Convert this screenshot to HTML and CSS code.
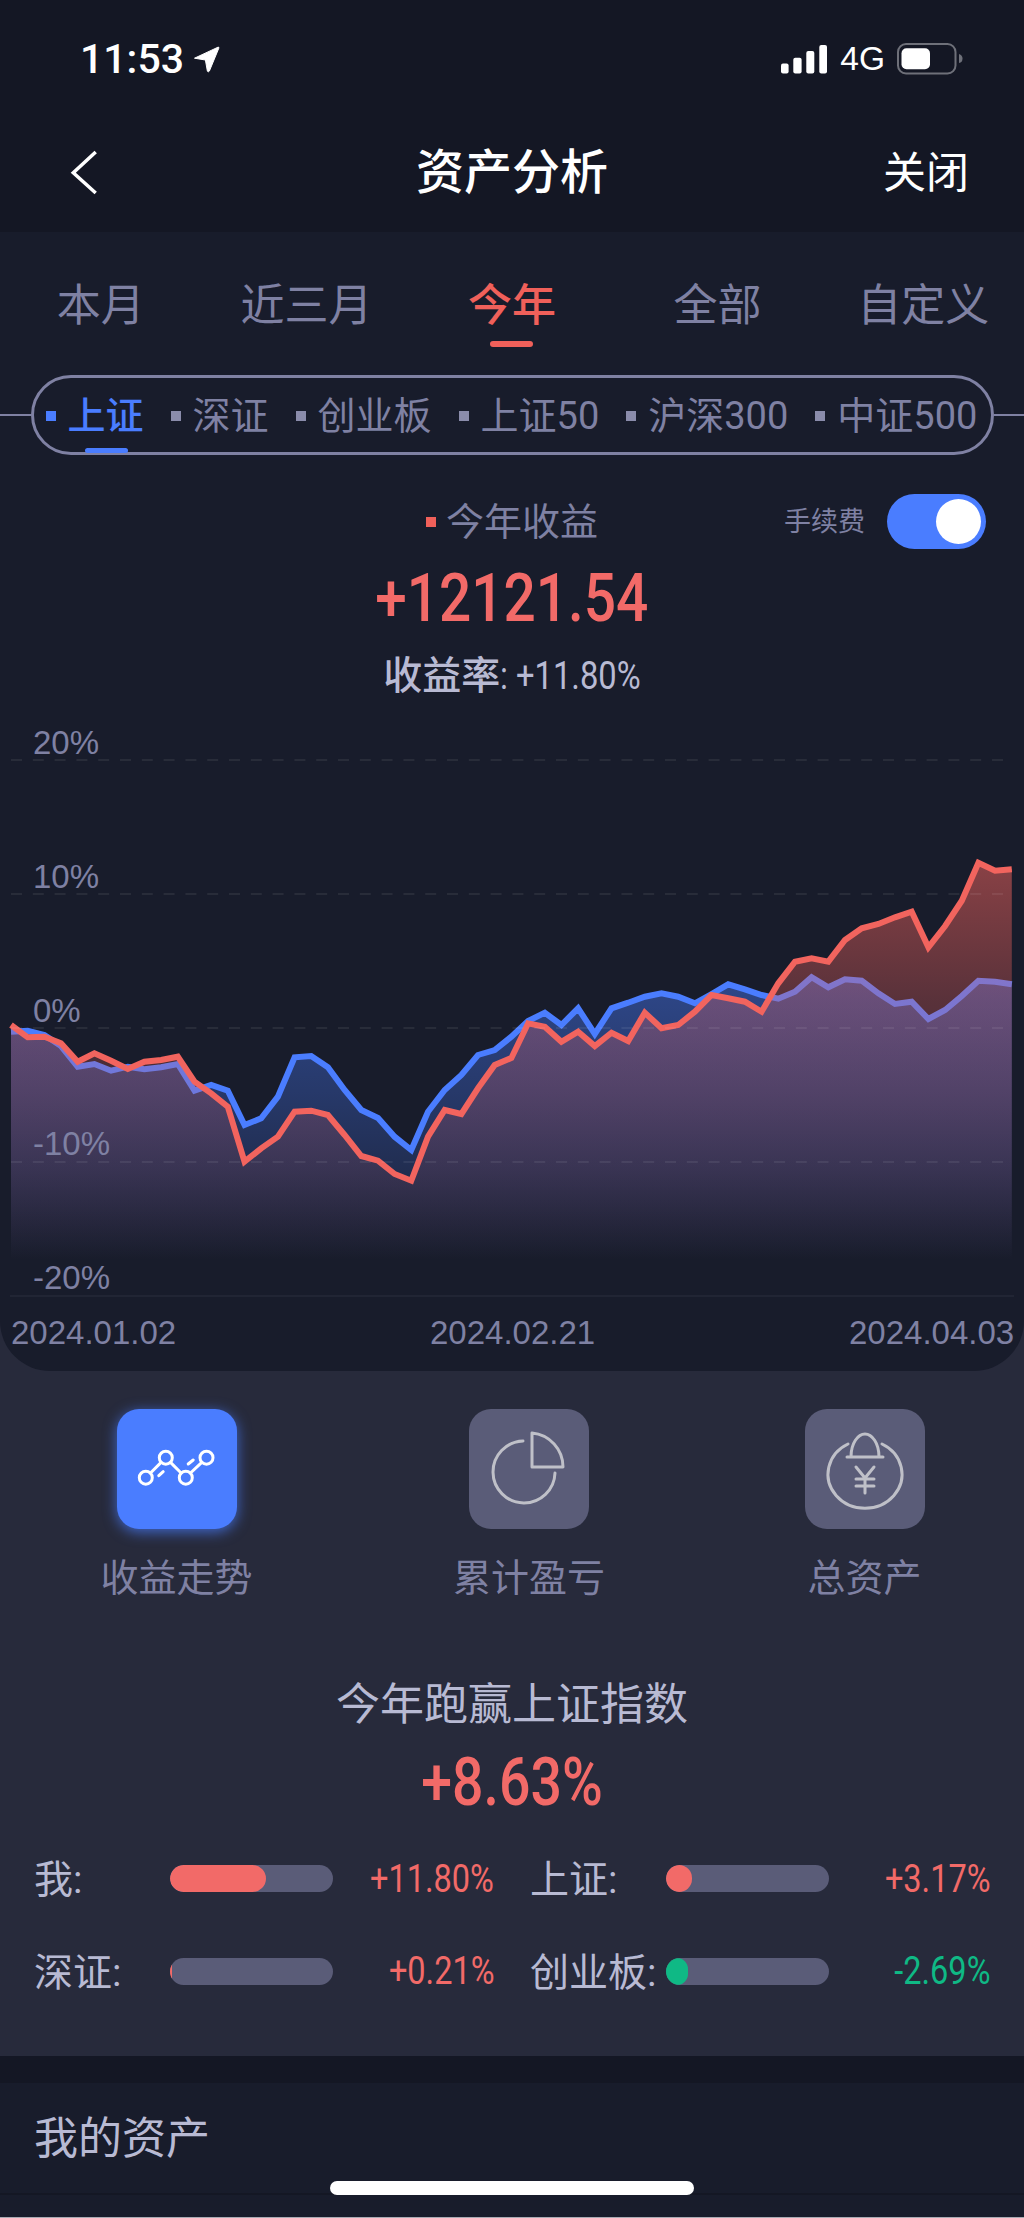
FILE: index.html
```html
<!DOCTYPE html>
<html lang="zh-CN">
<head>
<meta charset="utf-8">
<title>资产分析</title>
<link rel="stylesheet" href="styles.css">
</head>
<body>
<div class="page">
  <header class="top">
    <div class="status">
      <div class="status-left">
        <span class="time">11:53</span>
        <svg class="loc" width="27" height="27" viewBox="0 0 27 27"><path d="M1.5 12.2 L25 1.2 Q26.2 .8 25.8 2.2 L16.4 25 Q15.6 26.4 14.4 25.2 L12.4 14 Z" fill="#fff" stroke="#fff" stroke-width="1" stroke-linejoin="round"/></svg>
      </div>
      <div class="status-right">
        <svg class="signal" width="47" height="29" viewBox="0 0 47 29"><rect x="0" y="18.500" width="7.600" height="10" rx="2" fill="#fff"/><rect x="12.300" y="12.800" width="8.300" height="15.700" rx="2" fill="#fff"/><rect x="25.300" y="6.100" width="8" height="22.400" rx="2" fill="#fff"/><rect x="38.300" y="0.100" width="7.700" height="28.400" rx="2" fill="#fff"/></svg>
        <span class="net">4G</span>
        <svg class="battery" width="66" height="32" viewBox="0 0 66 32"><rect x="1" y="1" width="57.500" height="29.500" rx="8" fill="none" stroke="#6e7079" stroke-width="2"/><rect x="4.500" y="5.300" width="28.500" height="21" rx="5" fill="#fff"/><path d="M62 11 Q65.500 12 65.500 15.500 Q65.500 19.500 62 20 Z" fill="#6e7079"/></svg>
      </div>
    </div>
    <nav class="nav">
      <svg class="back" width="30" height="46" viewBox="0 0 30 46"><path d="M25.700 2 L3.300 22.700 L25.700 43" fill="none" stroke="#fff" stroke-width="3.500"/></svg>
      <h1 class="nav-title">资产分析</h1>
      <span class="nav-close">关闭</span>
    </nav>
  </header>

  <section class="panel">
    <div class="tabs">
      <div class="tab">本月</div>
      <div class="tab">近三月</div>
      <div class="tab active">今年<i class="tab-mark"></i></div>
      <div class="tab">全部</div>
      <div class="tab">自定义</div>
    </div>

    <div class="index-row">
      <span class="index-line"></span>
      <div class="index-pill">
        <div class="index-item active"><i class="bullet"></i><span>上证</span><i class="index-mark"></i></div>
        <div class="index-item"><i class="bullet"></i><span>深证</span></div>
        <div class="index-item"><i class="bullet"></i><span>创业板</span></div>
        <div class="index-item"><i class="bullet"></i><span>上证50</span></div>
        <div class="index-item"><i class="bullet"></i><span>沪深300</span></div>
        <div class="index-item"><i class="bullet"></i><span>中证500</span></div>
      </div>
      <span class="index-line"></span>
    </div>

    <div class="summary-head">
      <span></span>
      <div class="summary-label"><i class="bullet red"></i><span>今年收益</span></div>
      <div class="fee"><span class="fee-text">手续费</span><span class="toggle"><i class="knob"></i></span></div>
    </div>
    <div class="amount"><span class="amount-num">+12121.54</span></div>
    <div class="rate"><b class="rate-label">收益率</b><span class="rate-num">: +11.80%</span></div>

    <svg class="chart" width="1024" height="651" viewBox="0 720 1024 651">
      <defs>
        <linearGradient id="fillBlue" gradientUnits="userSpaceOnUse" x1="0" y1="862" x2="0" y2="1260">
          <stop offset="0" stop-color="#4a7dff" stop-opacity=".55"/>
          <stop offset=".289" stop-color="#4a7dff" stop-opacity=".45"/>
          <stop offset=".573" stop-color="#4a7dff" stop-opacity=".3"/>
          <stop offset=".774" stop-color="#4a7dff" stop-opacity=".18"/>
          <stop offset="1" stop-color="#4a7dff" stop-opacity="0"/>
        </linearGradient>
        <linearGradient id="fillRed" gradientUnits="userSpaceOnUse" x1="0" y1="862" x2="0" y2="1260">
          <stop offset="0" stop-color="#f2645e" stop-opacity=".52"/>
          <stop offset=".347" stop-color="#f2645e" stop-opacity=".3"/>
          <stop offset=".6" stop-color="#f2645e" stop-opacity=".2"/>
          <stop offset="1" stop-color="#f2645e" stop-opacity="0"/>
        </linearGradient>
      </defs>
      <polygon fill="url(#fillBlue)" points="11,1260 11,1031.7 27.7,1030.7 44.4,1035 61,1046 77.7,1066.7 94.4,1064 111.1,1070.7 127.8,1066.7 144.4,1069.3 161.1,1067.3 177.8,1064 194.5,1090.7 211.2,1085 227.8,1090.7 244.5,1125 261.2,1118.3 277.9,1096.7 294.6,1057.3 311.2,1056 327.9,1067.3 344.6,1090 361.3,1110 378,1118 394.6,1136.7 411.3,1150 428,1111.7 444.7,1090 461.4,1075 478,1055 494.7,1050 511.4,1036.7 528.1,1021 544.8,1012.7 561.4,1025 578.1,1008.3 594.8,1034 611.5,1008.3 628.2,1002.7 644.8,996.7 661.5,993.3 678.2,996.7 694.9,1003.3 711.6,994 728.2,984.3 744.9,989.3 761.6,995 778.3,998.7 795,991.7 811.6,977.3 828.3,987.3 845,979.3 861.7,980.7 878.4,993.3 895,1004 911.7,1001.7 928.4,1019 945.1,1010 961.8,996 978.4,980.7 995.1,981.7 1011.8,984.3 1011.8,1260"/>
      <polyline class="line line-blue" points="11,1031.7 27.7,1030.7 44.4,1035 61,1046 77.7,1066.7 94.4,1064 111.1,1070.7 127.8,1066.7 144.4,1069.3 161.1,1067.3 177.8,1064 194.5,1090.7 211.2,1085 227.8,1090.7 244.5,1125 261.2,1118.3 277.9,1096.7 294.6,1057.3 311.2,1056 327.9,1067.3 344.6,1090 361.3,1110 378,1118 394.6,1136.7 411.3,1150 428,1111.7 444.7,1090 461.4,1075 478,1055 494.7,1050 511.4,1036.7 528.1,1021 544.8,1012.7 561.4,1025 578.1,1008.3 594.8,1034 611.5,1008.3 628.2,1002.7 644.8,996.7 661.5,993.3 678.2,996.7 694.9,1003.3 711.6,994 728.2,984.3 744.9,989.3 761.6,995 778.3,998.7 795,991.7 811.6,977.3 828.3,987.3 845,979.3 861.7,980.7 878.4,993.3 895,1004 911.7,1001.7 928.4,1019 945.1,1010 961.8,996 978.4,980.7 995.1,981.7 1011.8,984.3"/>
      <polygon fill="url(#fillRed)" points="11,1260 11,1025 27.7,1037.3 44.4,1036.7 61,1043.3 77.7,1061.7 94.4,1053.3 111.1,1060.7 127.8,1069 144.4,1061.7 161.1,1060 177.8,1056.7 194.5,1081.7 211.2,1093.3 227.8,1106.7 244.5,1161.7 261.2,1148.3 277.9,1136.7 294.6,1111.7 311.2,1110.7 327.9,1115 344.6,1135 361.3,1156 378,1160.7 394.6,1174 411.3,1180.7 428,1136.7 444.7,1110 461.4,1114 478,1088.3 494.7,1065 511.4,1058 528.1,1023.3 544.8,1026.7 561.4,1041.7 578.1,1031.7 594.8,1046 611.5,1032.7 628.2,1041 644.8,1012.7 661.5,1028.3 678.2,1025 694.9,1011.7 711.6,995 728.2,998.3 744.9,1001.7 761.6,1011.7 778.3,983.3 795,961.7 811.6,958.3 828.3,961.7 845,940 861.7,928.3 878.4,924 895,917.3 911.7,911.7 928.4,947.3 945.1,926 961.8,900.7 978.4,862.7 995.1,870.7 1011.8,869.3 1011.8,1260"/>
      <polyline class="line line-red" points="11,1025 27.7,1037.3 44.4,1036.7 61,1043.3 77.7,1061.7 94.4,1053.3 111.1,1060.7 127.8,1069 144.4,1061.7 161.1,1060 177.8,1056.7 194.5,1081.7 211.2,1093.3 227.8,1106.7 244.5,1161.7 261.2,1148.3 277.9,1136.7 294.6,1111.7 311.2,1110.7 327.9,1115 344.6,1135 361.3,1156 378,1160.7 394.6,1174 411.3,1180.7 428,1136.7 444.7,1110 461.4,1114 478,1088.3 494.7,1065 511.4,1058 528.1,1023.3 544.8,1026.7 561.4,1041.7 578.1,1031.7 594.8,1046 611.5,1032.7 628.2,1041 644.8,1012.7 661.5,1028.3 678.2,1025 694.9,1011.7 711.6,995 728.2,998.3 744.9,1001.7 761.6,1011.7 778.3,983.3 795,961.7 811.6,958.3 828.3,961.7 845,940 861.7,928.3 878.4,924 895,917.3 911.7,911.7 928.4,947.3 945.1,926 961.8,900.7 978.4,862.7 995.1,870.7 1011.8,869.3"/>
      <path class="grid" d="M11 760H1005M11 894H1005M11 1028H1005M11 1162H1005"/>
      <path class="axis" d="M10 1296H1014"/>
      <text class="chart-label" x="33" y="754">20%</text>
      <text class="chart-label" x="33" y="888">10%</text>
      <text class="chart-label" x="33" y="1022">0%</text>
      <text class="chart-label" x="33" y="1155">-10%</text>
      <text class="chart-label" x="33" y="1289">-20%</text>
      <text class="chart-label" x="11" y="1344">2024.01.02</text>
      <text class="chart-label" x="430" y="1344">2024.02.21</text>
      <text class="chart-label" x="849" y="1344">2024.04.03</text>
    </svg>
  </section>

  <section class="analysis">
    <div class="modes">
      <div class="mode">
        <span class="tile tile-on">
          <svg width="119" height="120" viewBox="117.500 1409 119 120" fill="none" stroke="#fff" stroke-width="3" stroke-linecap="round">
            <circle cx="146.300" cy="1477.700" r="6.500"/><circle cx="166.300" cy="1457.700" r="6.500"/><circle cx="186.300" cy="1477.700" r="6.500"/><circle cx="207" cy="1457.700" r="6.500"/>
            <path d="M151 1473 L161.600 1462.400M171 1462.400 L181.600 1473M191 1473 L202.300 1462.400M159.300 1475.700 L163.700 1471.700M188.700 1464 L193.700 1460"/>
          </svg>
        </span>
        <span class="mode-name">收益走势</span>
      </div>
      <div class="mode">
        <span class="tile">
          <svg width="120" height="120" viewBox="469 1409 120 120" fill="none" stroke="#bfc0c8" stroke-width="3" stroke-linecap="round">
            <path d="M523 1441 A31 31 0 1 0 555 1473"/>
            <path d="M532 1433 V1467 H563 A34 34 0 0 0 532 1433 Z" stroke-linejoin="round"/>
          </svg>
        </span>
        <span class="mode-name">累计盈亏</span>
      </div>
      <div class="mode">
        <span class="tile">
          <svg width="119" height="120" viewBox="805 1409 119 120" fill="none" stroke="#bfc0c8" stroke-width="3" stroke-linecap="round" stroke-linejoin="round">
            <path d="M848 1444 A37 34 0 1 0 882 1444"/>
            <path d="M847 1457 H883M851 1457 C851 1443 858 1434 865 1434 C872 1434 879 1443 879 1457"/>
            <path d="M856 1467 L865 1478 L874 1467M856 1479 H874M856 1486 H874M865 1478 V1493"/>
          </svg>
        </span>
        <span class="mode-name">总资产</span>
      </div>
    </div>

    <h2 class="beat-title">今年跑赢上证指数</h2>
    <div class="beat-value"><span class="beat-num">+8.63%</span></div>

    <div class="compare">
      <div class="cmp">
        <span class="cmp-name">我:</span>
        <span class="track"><i class="bar red" style="width:96px"></i></span>
        <span class="cmp-val up"><span class="cmp-num">+11.80%</span></span>
      </div>
      <div class="cmp">
        <span class="cmp-name">上证:</span>
        <span class="track"><i class="bar red" style="width:26px"></i></span>
        <span class="cmp-val up"><span class="cmp-num">+3.17%</span></span>
      </div>
      <div class="cmp">
        <span class="cmp-name">深证:</span>
        <span class="track"><i class="bar red" style="width:2px"></i></span>
        <span class="cmp-val up"><span class="cmp-num">+0.21%</span></span>
      </div>
      <div class="cmp">
        <span class="cmp-name">创业板:</span>
        <span class="track"><i class="bar green" style="width:22px"></i></span>
        <span class="cmp-val down"><span class="cmp-num">-2.69%</span></span>
      </div>
    </div>
  </section>

  <div class="band"></div>

  <section class="assets">
    <h2 class="assets-title">我的资产</h2>
    <div class="assets-rule"></div>
  </section>

  <div class="home-bar"></div>
  <div class="screen-edge"></div>
</div>
</body>
</html>
```
FILE: styles.css
```css
* { box-sizing: border-box; }
html, body { margin: 0; padding: 0; }
body {
  width: 1024px;
  height: 2218px;
  overflow: hidden;
  background: #181c2b;
  font-family: Roboto, "Noto Sans CJK SC", sans-serif;
  color: #7f81a3;
}
i { display: block; font-style: normal; }
h1, h2 { margin: 0; font-weight: 400; }

.page { position: relative; width: 1024px; height: 2218px; overflow: hidden; }

/* header */
.top { height: 232px; background: #141724; }
.status { height: 116px; display: flex; justify-content: space-between; align-items: center; padding: 2px 61px 0 80px; }
.status-left { display: flex; align-items: center; gap: 9px; }
.time { font-size: 41px; font-weight: 500; line-height: 40px; color: #fff; }
.status-right { display: flex; align-items: center; }
.signal { margin-right: 12px; }
.net { font-family: "Liberation Sans", sans-serif; font-size: 33.5px; line-height: 40px; color: #fff; margin-right: 12px; }
.nav { height: 114px; display: flex; align-items: center; justify-content: space-between; padding: 0 55px 0 70px; position: relative; }
.nav-title { position: absolute; left: 0; right: 0; text-align: center; font-size: 48px; font-weight: 500; line-height: 60px; color: #fff; }
.nav-close { font-size: 43px; line-height: 60px; color: #fff; }

/* panel */
.panel { background: #181c2b; height: 1139px; border-radius: 0 0 50px 50px; position: relative; z-index: 1; }
.tabs { display: grid; grid-template-columns: repeat(5, 1fr); width: 1028px; margin-left: -2px; padding-top: 44px; }
.tab { font-size: 44px; line-height: 60px; text-align: center; display: flex; flex-direction: column; align-items: center; }
.tab.active { color: #f0605a; font-weight: 500; }
.tab-mark { width: 43px; height: 6px; margin-top: 5px; border-radius: 3px; background: #f0605a; }

.index-row { display: flex; align-items: center; margin-top: 28px; height: 80px; }
.index-line { flex: 1; height: 2px; background: #7f81a3; }
.index-pill { width: 963px; height: 80px; border: 3px solid #7f81a3; border-radius: 40px; display: flex; align-items: center; gap: 27px; padding-left: 12px; }
.index-item { position: relative; display: flex; align-items: center; gap: 12px; padding-top: 2px; font-size: 38px; line-height: 50px; white-space: nowrap; }
.index-item.active { color: #4a7dff; font-weight: 500; }
.bullet { width: 10px; height: 10px; background: #8a8cab; flex: none; }
.index-item.active .bullet { background: #4a7dff; }
.bullet.red { background: #f0605a; }
.index-mark { position: absolute; left: 39px; top: 59px; width: 43px; height: 5px; border-radius: 3px; background: #4a7dff; }

.summary-head { display: grid; grid-template-columns: 1fr auto 1fr; align-items: center; height: 55px; margin-top: 39px; }
.summary-label { display: flex; align-items: center; gap: 10px; font-size: 38px; line-height: 50px; }
.fee { justify-self: end; display: flex; align-items: center; gap: 22px; padding-right: 38px; }
.fee-text { font-size: 27px; line-height: 36px; }
.toggle { display: flex; align-items: center; justify-content: flex-end; width: 99px; height: 55px; padding-right: 5px; border-radius: 28px; background: #4a7dff; }
.knob { width: 45px; height: 45px; border-radius: 50%; background: #fff; }

.amount { margin-top: 11px; height: 78px; line-height: 78px; text-align: center; }
.amount-num { display: inline-block; font-size: 66px; font-weight: 500; color: #f26a68; transform: scaleX(.86); }
.rate { height: 76px; line-height: 76px; text-align: center; color: #b8bad3; }
.rate-label { font-size: 39px; font-weight: 500; }
.rate-num { display: inline-block; font-size: 38px; transform: scaleX(.86); transform-origin: left center; margin-right: -23px; }

.chart { display: block; margin-top: 6px; }
.line { fill: none; stroke-width: 6; stroke-linejoin: miter; }
.line-blue { stroke: #4a7dff; }
.line-red { stroke: #f2645e; }
.grid { fill: none; stroke: rgba(255,255,255,.07); stroke-width: 2; stroke-dasharray: 11 10.8; }
.axis { fill: none; stroke: rgba(255,255,255,.06); stroke-width: 1.5; }
.chart-label { font-family: "Liberation Sans", sans-serif; font-size: 33px; fill: #7f81a3; }

/* analysis */
.analysis { position: relative; margin-top: -51px; padding-top: 89px; height: 736px; background: #272a3b; }
.modes { display: flex; gap: 202.5px; padding-left: 101.5px; }
.mode { display: flex; flex-direction: column; align-items: center; width: 150px; }
.mode:last-child { width: 116px; }
.tile { display: flex; width: 120px; height: 120px; border-radius: 22px; background: #5a5c78; }
.tile-on { background: #4a7dff; box-shadow: 0 3px 14px rgba(74,125,255,.75); }
.mode-name { margin-top: 24px; font-size: 38px; line-height: 50px; white-space: nowrap; }

.beat-title { margin-top: 72px; text-align: center; font-size: 44px; line-height: 60px; color: #b8bad3; }
.beat-value { margin-top: 13px; height: 70px; line-height: 70px; text-align: center; }
.beat-num { display: inline-block; font-size: 66px; font-weight: 500; color: #f26a68; transform: scaleX(.84); }

.compare { display: grid; grid-template-columns: 460px 460px; column-gap: 36px; row-gap: 32.5px; margin-top: 30.5px; padding-left: 34px; }
.cmp { display: grid; grid-template-columns: 136px 163px 1fr; align-items: center; height: 60px; }
.cmp-name { font-size: 39px; line-height: 50px; padding-top: 3px; color: #b8bad3; white-space: nowrap; }
.track { display: block; width: 163px; height: 27px; border-radius: 14px; background: #5a5c78; overflow: hidden; }
.bar { height: 27px; border-radius: 14px; }
.bar.red { background: #f26a68; }
.bar.green { background: #0fb985; }
.cmp-val { text-align: right; white-space: nowrap; }
.cmp-num { display: inline-block; font-size: 38px; line-height: 50px; transform: scaleX(.855); transform-origin: right center; }
.up { color: #f26a68; }
.down { color: #0fb985; }

.band { height: 27px; background: #141724; }
.assets { padding-top: 26px; }
.assets-title { font-size: 44px; line-height: 60px; color: #b8bad3; padding-left: 34px; }
.assets-rule { height: 2px; margin-top: 24px; background: #141724; }

.home-bar { position: absolute; left: 330px; top: 2181px; width: 364px; height: 14px; border-radius: 7px; background: #fff; }
.screen-edge { position: absolute; left: 0; right: 0; bottom: 0; height: 1px; background: #a9aab3; }
```
